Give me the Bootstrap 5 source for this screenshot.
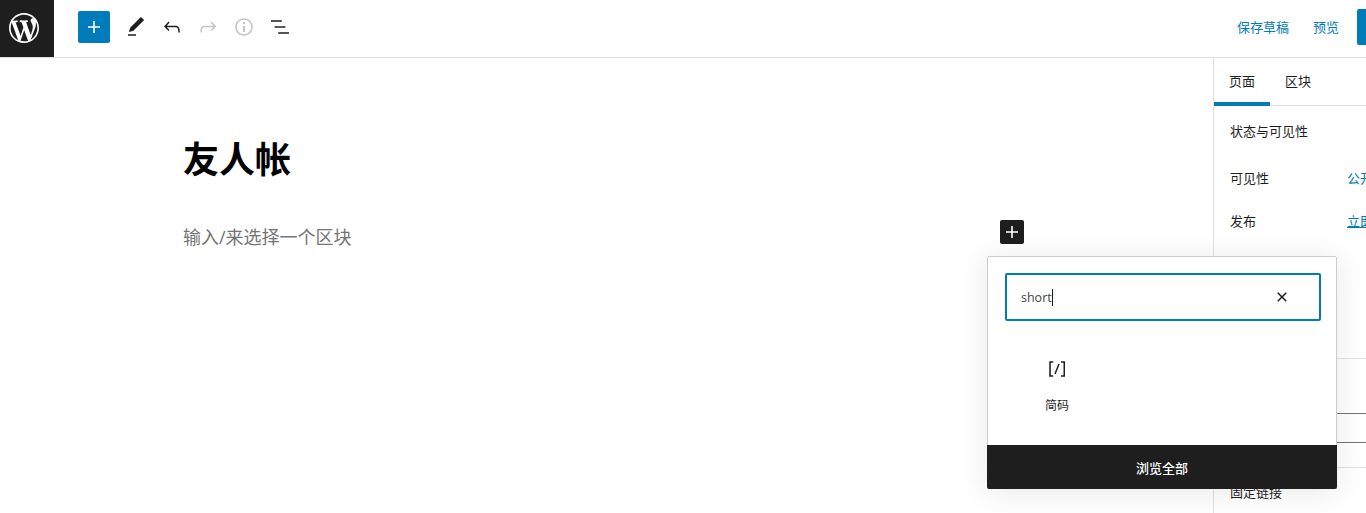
<!doctype html>
<html lang="zh">
<head>
  <title>编辑页面</title>
  <meta charset="utf-8" />
  <meta name="viewport" content="width=device-width, initial-scale=1" />
  <link href="https://cdn.jsdelivr.net/npm/bootstrap@5.3.2/dist/css/bootstrap.min.css" rel="stylesheet" />
  <style>
    html, body { height: 513px; overflow: hidden; }
    body { font-family: "Open Sans", "Noto Sans CJK SC", sans-serif; font-size: 13px; color: #1e1e1e; background: #fff; }
    svg { fill: currentColor; display: block; }
    .top-bar { height: 58px; border-bottom: 1px solid #e0e0e0; }
    .wp-logo { width: 54px; height: 57px; background: #1e1e1e; color: #fff; padding: 0 6px 1px 0; }
    .tool-row { margin-left: 24px; gap: 4px; height: 54px; }
    .add-btn { width: 32px; height: 32px; background: #007cba; color: #fff; border-radius: 2px; margin-right: 6px; }
    .tool-btn { width: 32px; height: 32px; color: #1e1e1e; }
    .tool-btn.off { color: #c4c4c4; }
    .wp-link { color: #007cba; text-decoration: none; }
    .right-tools { height: 54px; }
    .save-links { gap: 24px; margin-right: 18px; line-height: 56px; }
    .publish-btn { width: 9px; height: 36px; background: #007cba; border-radius: 2px 0 0 2px; }
    .work-area { height: 455px; }
    .editor-col { width: 1213px; padding-left: 183px; }
    .post-title { font-size: 36px; font-weight: 700; line-height: 48px; margin: 78px 0 0; color: #000; }
    .para-row { width: 841px; margin-top: 30px; height: 36px; }
    .para-hint { font-size: 18px; line-height: 46px; color: #757575; }
    .inline-add { width: 24px; height: 24px; background: #1e1e1e; color: #fff; border-radius: 2px; margin-top: 6px; }
    .inserter { left: 987px; top: 198px; width: 350px; height: 233px; background: #fff; border: 1px solid #ccc; border-radius: 2px; box-shadow: 0 3px 30px rgba(25,30,35,.1); z-index: 5; }
    .search-box { margin: 16px 15px 0 17px; height: 48px; border: 2px solid #007cba; border-radius: 2px; padding: 0 25px 0 14px; }
    .search-val { line-height: 46px; padding-top: 1px; color: #444; font-size: 12.5px; }
    .caret-bar { display: inline-block; width: 1px; height: 17px; background: #1e1e1e; vertical-align: -4px; }
    .block-item { width: 138px; margin-top: 36px; }
    .block-name { font-size: 12px; line-height: 18px; margin-top: 16px; }
    .browse-all { height: 44px; margin: 0 -1px -1px; background: #1e1e1e; color: #fff; line-height: 46px; border-radius: 0 0 2px 2px; font-weight: 500; }
    .side-col { width: 153px; border-left: 1px solid #e0e0e0; white-space: nowrap; overflow: hidden; }
    .side-tabs { height: 48px; border-bottom: 1px solid #e0e0e0; }
    .side-tab { width: 56px; text-align: center; line-height: 47px; height: 48px; }
    .side-tab.on { box-shadow: inset 0 -4px 0 #007cba; }
    .side-head { padding: 15px 16px 0; line-height: 20px; }
    .side-row { padding-left: 16px; line-height: 20px; }
    .side-row > span:first-child { width: 117px; flex: none; }
    .row-first { margin-top: 27px; }
    .row-next { margin-top: 23px; }
    .side-split { border-top: 1px solid #e0e0e0; margin-top: 127px; }
    .field-box { height: 30px; margin: 54px 0 0 16px; border-top: 1px solid #757575; border-bottom: 1px solid #757575; }
    .side-foot { margin-top: 24px; padding: 14px 16px 0; line-height: 20px; border-top: 1px solid #e0e0e0; }
  </style>
</head>
<body>

  <div class="top-bar d-flex align-items-start">
    <div class="wp-logo d-flex align-items-center justify-content-center">
      <svg width="30" height="30" viewBox="0 0 20 20"><path d="M20 10c0-5.51-4.49-10-10-10C4.48 0 0 4.49 0 10c0 5.52 4.48 10 10 10 5.51 0 10-4.48 10-10zM7.78 15.37L4.37 6.22c.55-.02 1.17-.08 1.17-.08.5-.06.44-1.13-.06-1.11 0 0-1.45.11-2.37.11-.18 0-.37 0-.58-.01C4.12 2.69 6.87 1.11 10 1.11c2.33 0 4.45.87 6.05 2.34-.68-.11-1.65.39-1.65 1.58 0 .74.45 1.36.9 2.1.35.61.55 1.36.55 2.46 0 1.49-1.4 5-1.4 5l-3.03-8.37c.54-.02.82-.17.82-.17.5-.05.44-1.25-.06-1.22 0 0-1.44.12-2.38.12-.87 0-2.33-.12-2.33-.12-.5-.03-.56 1.2-.06 1.22l.92.08 1.26 3.41zM17.41 10c.24-.64.74-1.87.43-4.25.7 1.29 1.05 2.71 1.05 4.25 0 3.29-1.73 6.24-4.4 7.78.97-2.59 1.94-5.2 2.92-7.78zM6.1 18.09C3.12 16.65 1.11 13.53 1.11 10c0-1.3.23-2.48.72-3.59C3.25 10.3 4.67 14.2 6.1 18.09zm4.03-6.63l2.58 6.98c-.86.29-1.76.45-2.71.45-.79 0-1.57-.11-2.29-.33.81-2.38 1.62-4.74 2.42-7.1z"/></svg>
    </div>
    <div class="tool-row d-flex align-items-center">
      <div class="add-btn d-flex align-items-center justify-content-center">
        <svg width="24" height="24" viewBox="0 0 24 24"><path d="M18 11.2h-5.2V6h-1.6v5.2H6v1.6h5.2V18h1.6v-5.2H18z"/></svg>
      </div>
      <div class="tool-btn d-flex align-items-center justify-content-center">
        <svg width="24" height="24" viewBox="0 0 24 24"><path d="M20.1 5.1L16.9 2 6.2 12.7l-1.3 4.4 4.5-1.3L20.1 5.1zM4 20.8h8v-1.5H4v1.5z"/></svg>
      </div>
      <div class="tool-btn d-flex align-items-center justify-content-center">
        <svg width="24" height="24" viewBox="0 0 24 24"><path d="M18.3 11.7c-.6-.6-1.4-.9-2.3-.9H6.7l2.9-3.3-1.1-1-4.5 5L8.5 16l1-1-2.7-2.7H16c.5 0 .9.2 1.3.5 1 1 1 3.4 1 4.5v.3h1.5v-.2c0-1.5 0-4.3-1.5-5.7z"/></svg>
      </div>
      <div class="tool-btn off d-flex align-items-center justify-content-center">
        <svg width="24" height="24" viewBox="0 0 24 24"><path d="M15.6 6.5l-1.1 1 2.9 3.3H8c-.9 0-1.7.3-2.3.9-1.4 1.5-1.4 4.2-1.4 5.6v.2h1.5v-.3c0-1.1 0-3.5 1-4.5.3-.3.7-.5 1.3-.5h9.2L14.5 15l1.1 1.1 4.6-4.6-4.6-5z"/></svg>
      </div>
      <div class="tool-btn off d-flex align-items-center justify-content-center">
        <svg width="24" height="24" viewBox="0 0 24 24"><path d="M12 3.2c-4.8 0-8.8 3.9-8.8 8.8 0 4.8 3.9 8.8 8.8 8.8 4.8 0 8.8-3.9 8.8-8.8 0-4.8-4-8.8-8.8-8.8zm0 16c-4 0-7.2-3.3-7.2-7.2C4.8 8 8 4.8 12 4.8s7.2 3.3 7.2 7.2c0 4-3.2 7.2-7.2 7.2zM11 17h2v-6h-2v6zm0-8h2V7h-2v2z"/></svg>
      </div>
      <div class="tool-btn d-flex align-items-center justify-content-center">
        <svg width="24" height="24" viewBox="0 0 24 24"><path d="M13.8 5.2H3v1.5h10.8V5.2zm-3.6 12v1.5H21v-1.5H10.2zm7.2-6H6.6v1.5h10.8v-1.5z"/></svg>
      </div>
    </div>
    <div class="right-tools ms-auto d-flex align-items-center">
      <div class="save-links d-flex">
        <a class="wp-link" href="#">保存草稿</a>
        <a class="wp-link" href="#">预览</a>
      </div>
      <div class="publish-btn"></div>
    </div>
  </div>

  <div class="work-area d-flex position-relative">
    <div class="editor-col">
      <h1 class="post-title">友人帐</h1>
      <div class="para-row d-flex justify-content-between align-items-start">
        <div class="para-hint">输入/来选择一个区块</div>
        <div class="inline-add d-flex align-items-center justify-content-center">
          <svg width="24" height="24" viewBox="0 0 24 24"><path d="M18 11.2h-5.2V6h-1.6v5.2H6v1.6h5.2V18h1.6v-5.2H18z"/></svg>
        </div>
      </div>
    </div>

    <div class="inserter position-absolute d-flex flex-column">
      <div class="search-box d-flex align-items-center justify-content-between">
        <div class="search-val">short<span class="caret-bar"></span></div>
        <svg width="24" height="24" viewBox="0 0 24 24"><path d="M12 13.06l3.712 3.713 1.061-1.06L13.061 12l3.712-3.712-1.06-1.06L12 10.938 8.288 7.227l-1.061 1.06L10.939 12l-3.712 3.712 1.06 1.061L12 13.061z"/></svg>
      </div>
      <div class="block-item d-flex flex-column align-items-center">
        <svg width="24" height="24" viewBox="0 0 24 24"><path d="M16 4.2v1.5h2.5v12.5H16v1.5h4V4.2h-4zM4.2 19.8h4v-1.5H5.8V5.8h2.5V4.2h-4l-.1 15.6zm5.1-3.1l1.4.6 4-10-1.4-.6-4 10z"/></svg>
        <div class="block-name">简码</div>
      </div>
      <div class="browse-all mt-auto text-center">浏览全部</div>
    </div>

    <div class="side-col">
      <div class="side-tabs d-flex">
        <div class="side-tab on">页面</div>
        <div class="side-tab">区块</div>
      </div>
      <div class="side-head">状态与可见性</div>
      <div class="side-row row-first d-flex"><span>可见性</span><a class="wp-link" href="#">公开</a></div>
      <div class="side-row row-next d-flex"><span>发布</span><a class="wp-link text-decoration-underline" href="#">立即</a></div>
      <div class="side-split"></div>
      <div class="field-box"></div>
      <div class="side-foot">固定链接</div>
    </div>
  </div>

</body>
</html>
